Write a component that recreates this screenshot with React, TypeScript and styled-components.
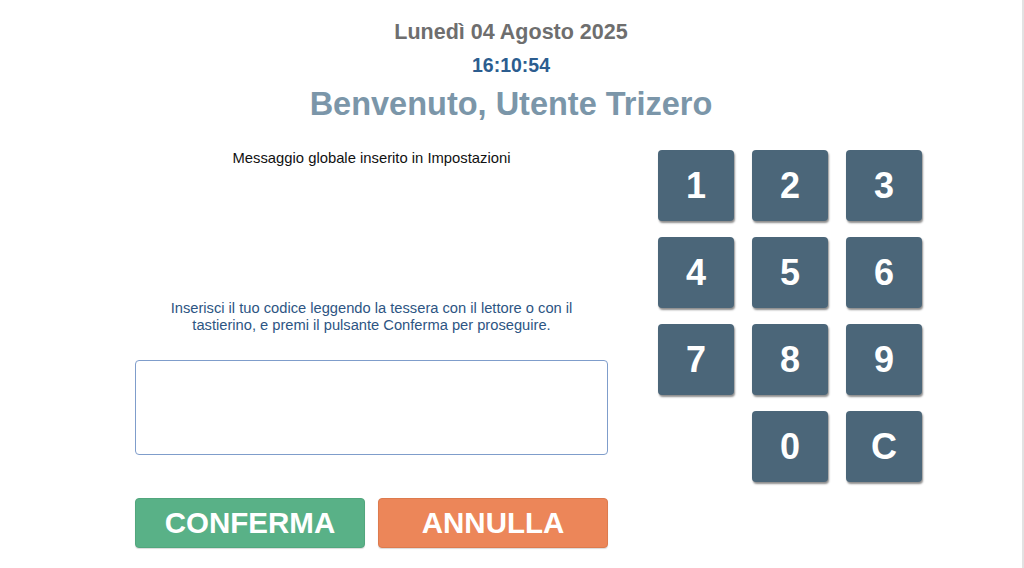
import { ReactElement } from 'react';
import styled, { createGlobalStyle } from 'styled-components';

const keys = ['1', '2', '3', '4', '5', '6', '7', '8', '9', '', '0', 'C'];

const App = (): ReactElement => {
  return (
    <>
      <GlobalStyle />
      <Page>
        <Header>
          <DateLine>Lunedì 04 Agosto 2025</DateLine>
          <Clock>16:10:54</Clock>
          <Welcome>Benvenuto, Utente Trizero</Welcome>
        </Header>

        <Main>
          <LeftColumn>
            <GlobalMessage>Messaggio globale inserito in Impostazioni</GlobalMessage>
            <Instructions>
              Inserisci il tuo codice leggendo la tessera con il lettore o con il
              <br />
              tastierino, e premi il pulsante Conferma per proseguire.
            </Instructions>
            <CodeInput type="password" aria-label="Codice" />
            <Actions>
              <ActionButton $tone="confirm">CONFERMA</ActionButton>
              <ActionButton $tone="cancel">ANNULLA</ActionButton>
            </Actions>
          </LeftColumn>

          <Keypad>
            {keys.map((k, i) =>
              k ? <Key key={i}>{k}</Key> : <span key={i} />
            )}
          </Keypad>
        </Main>
      </Page>
    </>
  );
};

const GlobalStyle = createGlobalStyle`
  html, body {
    margin: 0;
    padding: 0;
    background: #ffffff;
    font-family: "Liberation Sans", Arial, Helvetica, sans-serif;
  }
`;

const Page = styled.div`
  width: 1024px;
  height: 568px;
  box-sizing: border-box;
  border-right: 2px solid #e2e2e2;
  overflow: hidden;
`;

const Header = styled.header`
  display: flex;
  flex-direction: column;
  align-items: center;
  padding-top: 20px;
`;

const DateLine = styled.div`
  font-size: 21.5px;
  line-height: 24px;
  font-weight: bold;
  color: #6e6e6e;
`;

const Clock = styled.div`
  margin-top: 10px;
  font-size: 19.5px;
  line-height: 22px;
  font-weight: bold;
  color: #2c5d8f;
`;

const Welcome = styled.h1`
  margin: 10px 0 0;
  font-size: 32.5px;
  line-height: 36px;
  font-weight: bold;
  color: #7b96a9;
`;

const Main = styled.main`
  display: flex;
  align-items: flex-start;
  gap: 50px;
  padding-left: 135px;
  margin-top: 28px;
`;

const LeftColumn = styled.section`
  width: 473px;
  display: flex;
  flex-direction: column;
`;

const GlobalMessage = styled.p`
  margin: 0;
  font-size: 14.8px;
  line-height: 16px;
  color: #111111;
  text-align: center;
`;

const Instructions = styled.p`
  margin: 134px 0 0;
  font-size: 14.7px;
  line-height: 17px;
  color: #2d5583;
  text-align: center;
`;

const CodeInput = styled.input`
  margin-top: 26px;
  height: 95px;
  box-sizing: border-box;
  border: 1px solid #7f9dcb;
  border-radius: 4px;
  font-size: 28px;
  padding: 0 12px;
  outline: none;
`;

const Actions = styled.div`
  display: grid;
  grid-template-columns: 230px 230px;
  justify-content: space-between;
  margin-top: 43px;
`;

const ActionButton = styled.button<{ $tone: 'confirm' | 'cancel' }>`
  height: 50px;
  border: 1px solid ${(p) => (p.$tone === 'confirm' ? '#52a67d' : '#dd7b4e')};
  border-radius: 4px;
  background: ${(p) => (p.$tone === 'confirm' ? '#59b187' : '#ec8659')};
  color: #ffffff;
  font-family: "Liberation Sans", Arial, sans-serif;
  font-size: 29.5px;
  font-weight: bold;
  box-shadow: 0 1px 1px rgba(0, 0, 0, 0.15);
  cursor: pointer;
`;

const Keypad = styled.div`
  display: grid;
  grid-template-columns: repeat(3, 76px);
  grid-auto-rows: 71px;
  column-gap: 18px;
  row-gap: 16px;
`;

const Key = styled.button`
  border: none;
  border-radius: 4px;
  background: #4b6679;
  color: #ffffff;
  font-family: "Liberation Sans", Arial, sans-serif;
  font-size: 36px;
  font-weight: bold;
  box-shadow: 1px 2px 2px rgba(0, 0, 0, 0.45);
  cursor: pointer;
`;

export default App;
